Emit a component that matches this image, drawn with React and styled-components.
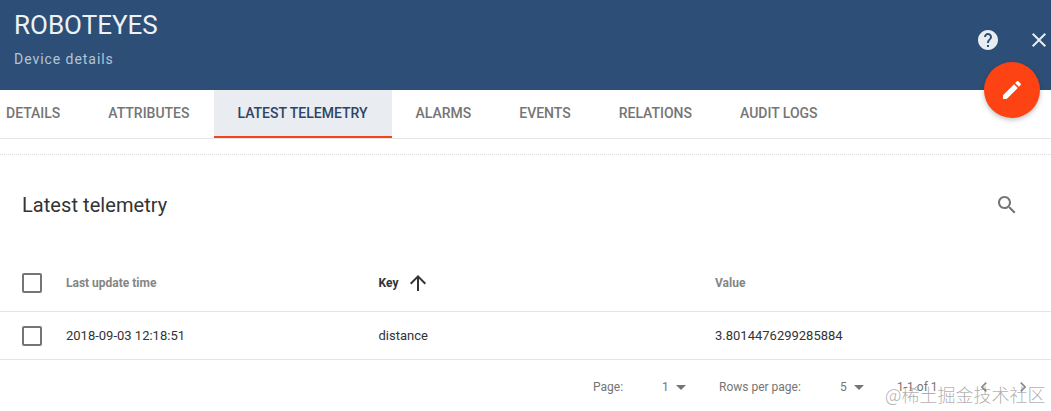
import React from "react";
import styled, { createGlobalStyle } from "styled-components";

const Global = createGlobalStyle`
  html, body { margin: 0; padding: 0; background: #fff; overflow: hidden; }
  * { box-sizing: border-box; }
  body { font-family: Roboto, "Liberation Sans", sans-serif; }
`;

const Page = styled.div`
  position: relative;
  width: 1051px;
  height: 411px;
  overflow: hidden;
  background: #fff;
`;

const Header = styled.header`
  height: 90px;
  background: #2d4f77;
  padding: 10px 14px 0;
  display: flex;
  justify-content: space-between;
  color: #fff;
`;

const Titles = styled.div`
  display: flex;
  flex-direction: column;
`;

const Title = styled.h1`
  margin: 0;
  font-size: 26px;
  line-height: 30px;
  font-weight: 400;
  color: #eef2f6;
`;

const Subtitle = styled.div`
  margin-top: 9px;
  font-size: 14px;
  line-height: 20px;
  letter-spacing: 0.95px;
  color: #b4c4d5;
`;

const HeaderActions = styled.div`
  display: flex;
  align-items: center;
  gap: 27px;
  height: 36px;
  margin: 12px -14px 0 0;
  color: #e8edf2;
`;

const Fab = styled.button`
  position: absolute;
  top: 62px;
  left: 984px;
  width: 56px;
  height: 56px;
  border: 0;
  border-radius: 50%;
  background: #fd4314;
  color: #fff;
  display: flex;
  align-items: center;
  justify-content: center;
  box-shadow: 0 2px 5px rgba(0, 0, 0, 0.26);
  padding: 0;
`;

const Tabs = styled.nav`
  height: 49px;
  display: flex;
  margin-left: -18px;
  border-bottom: 1px solid #e4e4e4;
`;

const Tab = styled.div`
  height: 48px;
  padding: 0 24px;
  display: flex;
  align-items: center;
  font-size: 14px;
  font-weight: 500;
  letter-spacing: -0.01px;
  color: ${(p) => (p.$active ? "#2d4466" : "#757575")};
  background: ${(p) => (p.$active ? "#e9ecf0" : "transparent")};
  border-bottom: 2px solid ${(p) => (p.$active ? "#f0451e" : "transparent")};
`;

const DottedRule = styled.div`
  height: 16px;
  border-bottom: 1px dotted #dcdcdc;
`;

const CardTitleRow = styled.div`
  height: 100px;
  padding: 0 32px 0 22px;
  display: flex;
  align-items: center;
  justify-content: space-between;
`;

const CardTitle = styled.h2`
  margin: 0;
  font-size: 20px;
  font-weight: 400;
  letter-spacing: 0.06px;
  color: #333;
`;

const SearchIcon = styled.div`
  display: flex;
  color: #757575;
`;

const Row = styled.div`
  display: grid;
  grid-template-columns: 44px 312.5px 336.5px 1fr;
  align-items: center;
  height: ${(p) => p.$h}px;
  border-bottom: 1px solid #e4e4e4;
  padding-left: 22px;
`;

const Check = styled.span`
  display: block;
  width: 20px;
  height: 20px;
  border: 2px solid #757575;
  border-radius: 2px;
`;

const HeadCell = styled.div`
  display: flex;
  align-items: center;
  gap: 8px;
  font-size: 12px;
  font-weight: 700;
  color: ${(p) => (p.$sorted ? "#333" : "#858585")};
`;

const SortIcon = styled.span`
  display: flex;
  color: #333;
`;

const Cell = styled.div`
  font-size: 13px;
  color: #333;
`;

const Footer = styled.footer`
  height: 51px;
  display: flex;
  align-items: center;
  padding: 2px 0 0 593px;
  font-size: 12px;
  color: #757575;
`;

const Label = styled.span`
  display: block;
  width: ${(p) => p.$w}px;
`;

const Picker = styled.span`
  display: flex;
  align-items: center;
  width: ${(p) => p.$w}px;
`;

const Range = styled.span`
  display: block;
  width: 77px;
`;

const Pager = styled.span`
  display: flex;
  color: #8a8a8a;
  gap: 19px;
`;

const Watermark = styled.div`
  position: absolute;
  left: 885px;
  top: 381px;
  font-family: "Noto Sans CJK SC", sans-serif;
  font-size: 18px;
  font-weight: 300;
  line-height: 26px;
  color: rgba(120, 120, 120, 0.6);
  white-space: nowrap;
`;

const Icon = ({ d, size = 24 }) => (
  <svg width={size} height={size} viewBox="0 0 24 24" fill="currentColor" aria-hidden="true">
    <path d={d} />
  </svg>
);

const P = {
  help: "M12 2C6.48 2 2 6.48 2 12s4.48 10 10 10 10-4.48 10-10S17.52 2 12 2zm1 17h-2v-2h2v2zm2.07-7.75l-.9.92C13.45 12.9 13 13.5 13 15h-2v-.5c0-1.1.45-2.1 1.17-2.83l1.24-1.26c.37-.36.59-.86.59-1.41 0-1.1-.9-2-2-2s-2 .9-2 2H8c0-2.21 1.79-4 4-4s4 1.79 4 4c0 .88-.36 1.68-.93 2.25z",
  close: "M19 6.41L17.59 5 12 10.59 6.41 5 5 6.41 10.59 12 5 17.59 6.41 19 12 13.41 17.59 19 19 17.59 13.41 12z",
  edit: "M3 17.25V21h3.75L17.81 9.94l-3.75-3.75L3 17.25zM20.71 7.04c.39-.39.39-1.02 0-1.41l-2.34-2.34c-.39-.39-1.02-.39-1.41 0l-1.83 1.83 3.75 3.75 1.83-1.83z",
  search: "M15.5 14h-.79l-.28-.27C15.41 12.59 16 11.11 16 9.5 16 5.91 13.09 3 9.5 3S3 5.91 3 9.5 5.91 16 9.5 16c1.61 0 3.09-.59 4.23-1.57l.27.28v.79l5 4.99L20.49 19l-4.99-5zm-6 0C7.01 14 5 11.99 5 9.5S7.01 5 9.5 5 14 7.01 14 9.5 11.99 14 9.5 14z",
  up: "M4 12l1.41 1.41L11 7.83V20h2V7.83l5.58 5.59L20 12l-8-8-8 8z",
  drop: "M7 10l5 5 5-5z",
  prev: "M15.41 7.41L14 6l-6 6 6 6 1.41-1.41L10.83 12z",
  next: "M10 6L8.59 7.41 13.17 12l-4.58 4.59L10 18l6-6z",
};

const tabs = ["DETAILS", "ATTRIBUTES", "LATEST TELEMETRY", "ALARMS", "EVENTS", "RELATIONS", "AUDIT LOGS"];

export default function App() {
  return (
    <Page>
      <Global />
      <Header>
        <Titles>
          <Title>ROBOTEYES</Title>
          <Subtitle>Device details</Subtitle>
        </Titles>
        <HeaderActions>
          <Icon d={P.help} />
          <Icon d={P.close} />
        </HeaderActions>
      </Header>
      <Fab aria-label="Edit">
        <Icon d={P.edit} />
      </Fab>
      <Tabs>
        {tabs.map((t) => (
          <Tab key={t} $active={t === "LATEST TELEMETRY"}>{t}</Tab>
        ))}
      </Tabs>
      <DottedRule />
      <CardTitleRow>
        <CardTitle>Latest telemetry</CardTitle>
        <SearchIcon><Icon d={P.search} /></SearchIcon>
      </CardTitleRow>
      <Row $h={57}>
        <Check />
        <HeadCell>Last update time</HeadCell>
        <HeadCell $sorted>
          Key
          <SortIcon><Icon d={P.up} /></SortIcon>
        </HeadCell>
        <HeadCell>Value</HeadCell>
      </Row>
      <Row $h={48}>
        <Check />
        <Cell>2018-09-03 12:18:51</Cell>
        <Cell>distance</Cell>
        <Cell>3.8014476299285884</Cell>
      </Row>
      <Footer>
        <Label $w={69}>Page:</Label>
        <Picker $w={57}>1 <Icon d={P.drop} size={24} /></Picker>
        <Label $w={121}>Rows per page:</Label>
        <Picker $w={57}>5 <Icon d={P.drop} size={24} /></Picker>
        <Range>1-1 of 1</Range>
        <Pager>
          <Icon d={P.prev} size={20} />
          <Icon d={P.next} size={20} />
        </Pager>
      </Footer>
      <Watermark>@稀土掘金技术社区</Watermark>
    </Page>
  );
}
